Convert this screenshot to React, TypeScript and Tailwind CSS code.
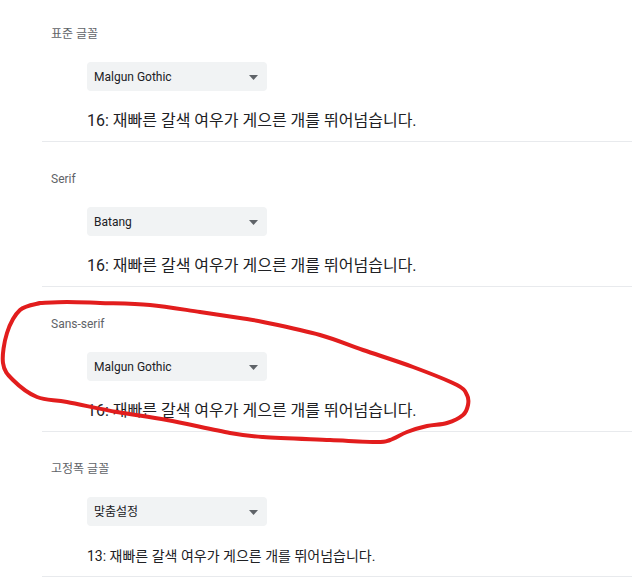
import React from 'react';

type FontSection = {
  label: string;
  value: string;
  sample: string;
  mono?: boolean;
};

const sections: FontSection[] = [
  { label: '표준 글꼴', value: 'Malgun Gothic', sample: '16: 재빠른 갈색 여우가 게으른 개를 뛰어넘습니다.' },
  { label: 'Serif', value: 'Batang', sample: '16: 재빠른 갈색 여우가 게으른 개를 뛰어넘습니다.' },
  { label: 'Sans-serif', value: 'Malgun Gothic', sample: '16: 재빠른 갈색 여우가 게으른 개를 뛰어넘습니다.' },
  { label: '고정폭 글꼴', value: '맞춤설정', sample: '13: 재빠른 갈색 여우가 게으른 개를 뛰어넘습니다.', mono: true },
];

// hand-traced marker stroke around the Sans-serif block
const markPoints: [number, number][] = [
  [40, 303], [67, 302], [100, 303], [150, 305], [200, 312], [240, 318], [263, 322],
  [320, 335], [363, 350], [413, 367], [457, 385], [467, 395], [468, 405], [463, 415],
  [447, 423], [427, 426], [407, 432], [390, 440], [377, 442], [330, 440], [263, 437],
  [230, 433], [167, 420], [117, 412], [67, 402], [37, 397], [13, 380], [3, 363],
  [7, 333], [20, 310], [40, 303],
];

function smoothPath(pts: [number, number][]) {
  let d = `M${pts[0][0]},${pts[0][1]}`;
  for (let i = 0; i < pts.length - 1; i++) {
    const p0 = pts[i - 1] || pts[i];
    const p1 = pts[i];
    const p2 = pts[i + 1];
    const p3 = pts[i + 2] || p2;
    const c1x = p1[0] + (p2[0] - p0[0]) / 6;
    const c1y = p1[1] + (p2[1] - p0[1]) / 6;
    const c2x = p2[0] - (p3[0] - p1[0]) / 6;
    const c2y = p2[1] - (p3[1] - p1[1]) / 6;
    d += ` C${c1x},${c1y} ${c2x},${c2y} ${p2[0]},${p2[1]}`;
  }
  return d;
}

const FontSelect: React.FC<{ value: string }> = ({ value }) => (
  <div className="mt-[20px] ml-[45px] flex h-[29px] w-[180px] items-center justify-between rounded-[4px] bg-[#f1f3f4] pl-[7px] pr-[9px]">
    <span className="text-[12px] text-[#202124]">{value}</span>
    <svg width="9" height="5" viewBox="0 0 9 5" className="mt-px">
      <path d="M0 0 L9 0 L4.5 5 Z" fill="#5f6368" />
    </svg>
  </div>
);

export default function App() {
  return (
    <div
      className="relative h-[587px] w-[632px] overflow-hidden bg-white"
      style={{ fontFamily: "Roboto, 'Noto Sans CJK KR', sans-serif" }}
    >
      <div className="pl-[42px]">
        {sections.map((s, i) => (
          <section
            key={i}
            className={`border-b border-[#e8eaed] pb-[8px] ${i === 0 ? 'pt-[26px]' : 'pt-[29px]'}`}
          >
            <div className="pl-[9px] text-[12px] leading-[16px] text-[#5f6368]">{s.label}</div>
            <FontSelect value={s.value} />
            {s.mono ? (
              <div className="mt-[18px] ml-[45px] text-[14px] leading-[24px] text-[#202124]">{s.sample}</div>
            ) : (
              <div className="mt-[18px] ml-[45px] text-[16px] leading-[24px] text-[#202124]">{s.sample}</div>
            )}
          </section>
        ))}
      </div>

      <svg className="pointer-events-none absolute inset-0" width="632" height="587">
        <path
          d={smoothPath(markPoints)}
          fill="none"
          stroke="#e21d1d"
          strokeWidth="4"
          strokeLinecap="round"
          strokeLinejoin="round"
        />
      </svg>
    </div>
  );
}
